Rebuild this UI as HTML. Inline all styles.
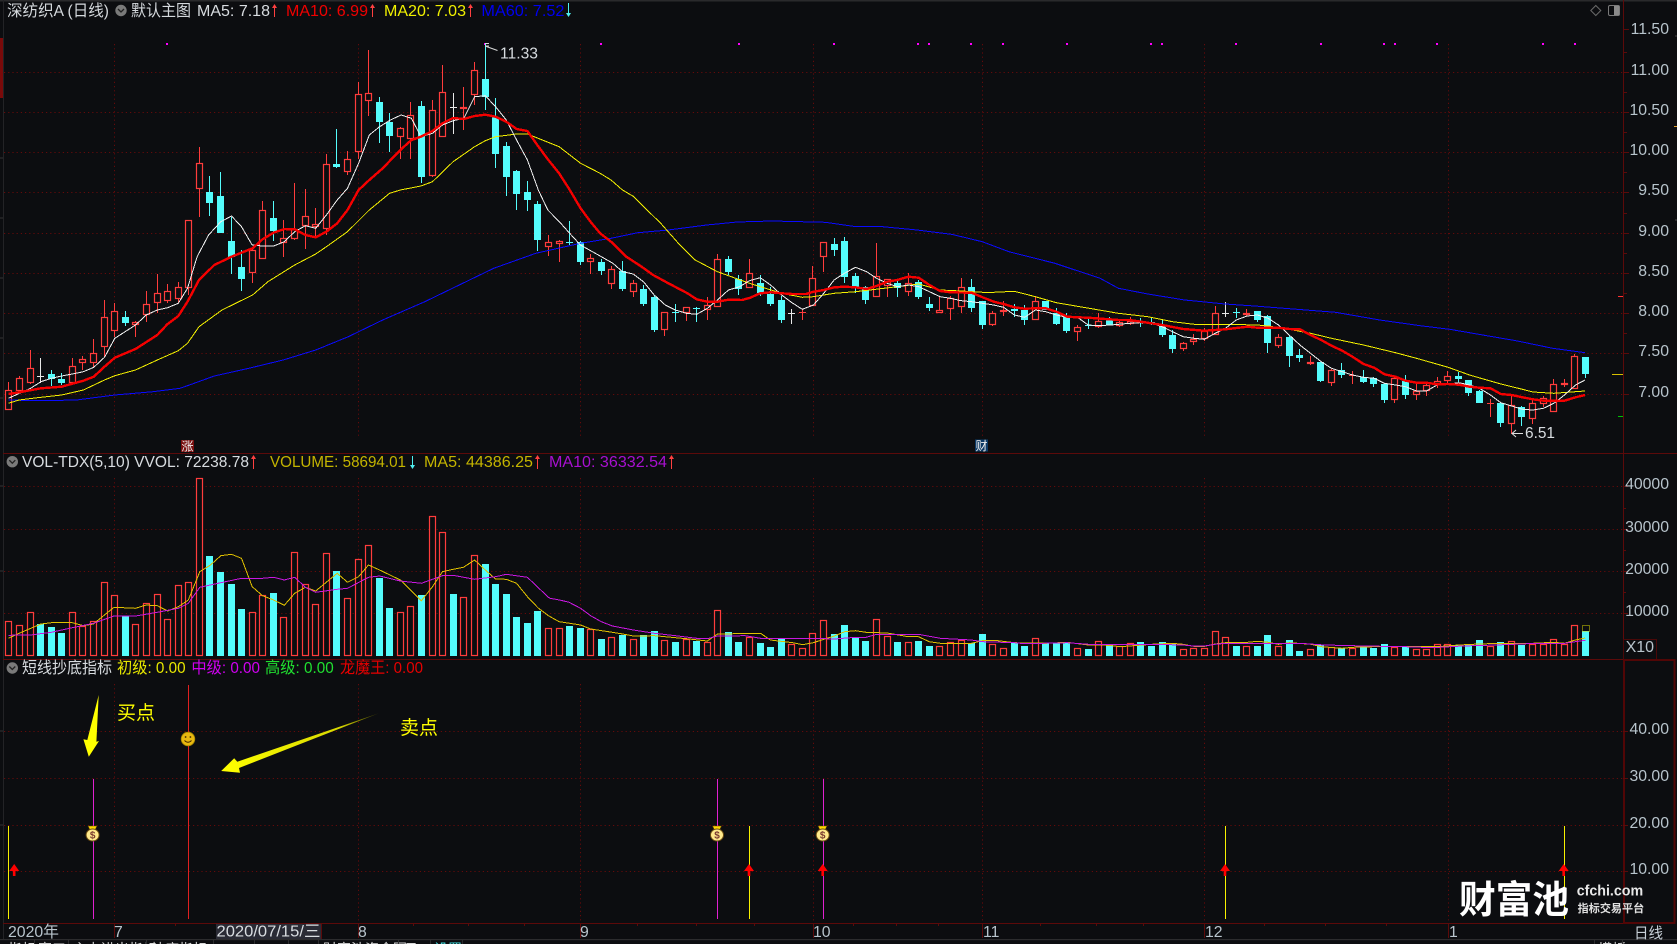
<!DOCTYPE html>
<html lang="zh">
<head>
<meta charset="utf-8">
<title>深纺织A (日线)</title>
<style>
html,body{margin:0;padding:0;background:#0c0d10;width:1677px;height:944px;overflow:hidden}
svg{display:block;position:absolute;left:0;top:0}
text{font-family:"Liberation Sans","Noto Sans CJK SC",sans-serif}
.ax{fill:#b8c4cc;font-size:15.8px;text-anchor:end}
.h{font-size:16px}
</style>
</head>
<body>
<svg id="s" width="1677" height="944" viewBox="0 0 1677 944" xmlns="http://www.w3.org/2000/svg">
<defs>
<linearGradient id="ag" x1="378.9" y1="713.3" x2="225" y2="771" gradientUnits="userSpaceOnUse">
<stop offset="0" stop-color="#3a3a00"/><stop offset="0.25" stop-color="#d8d800"/><stop offset="1" stop-color="#ffff00"/>
</linearGradient>
</defs>
<rect width="1677" height="944" fill="#0c0d10"/>
<rect x="0" y="0" width="1677" height="1.5" fill="#2a2a2c"/>
<rect x="3" y="0" width="1" height="939" fill="#232326"/>
<rect x="0" y="38" width="3" height="60" fill="#7a0a0a"/>
<path d="M0 158H3M0 218H3M0 278H3M0 338H3M0 398H3M0 486H3M0 571H3M0 731H3M0 825H3" stroke="#333" stroke-width="1"/>

<g id="grid" fill="none" stroke="#640a0a" stroke-width="1" stroke-dasharray="1.2 3">
<path d="M4 72.5H1623M4 112.5H1623M4 152.5H1623M4 192.5H1623M4 233.5H1623M4 273.5H1623M4 313.5H1623M4 353.5H1623M4 394.5H1623"/>
<path d="M4 486.5H1623M4 529.5H1623M4 571.5H1623M4 613.5H1623"/>
<path d="M4 731.5H1623M4 778.5H1623M4 825.5H1623M4 871.5H1623"/>
<path d="M114.5 44V438M358.5 44V438M580.5 44V438M813.5 44V438M982.5 44V438M1204.5 44V438M1448.5 44V438"/>
<path d="M114.5 478V655M358.5 478V655M580.5 478V655M813.5 478V655M982.5 478V655M1204.5 478V655M1448.5 478V655"/>
<path d="M114.5 684V923M358.5 684V923M580.5 684V923M813.5 684V923M982.5 684V923M1204.5 684V923M1448.5 684V923"/>
</g>

<g fill="#ff00ff">
<rect x="166" y="43" width="2" height="2"/><rect x="484" y="43" width="2" height="2"/><rect x="600" y="43" width="2" height="2"/><rect x="738" y="43" width="2" height="2"/><rect x="833" y="43" width="2" height="2"/><rect x="917" y="43" width="2" height="2"/><rect x="928" y="43" width="2" height="2"/><rect x="970" y="43" width="2" height="2"/><rect x="1002" y="43" width="2" height="2"/><rect x="1066" y="43" width="2" height="2"/><rect x="1150" y="43" width="2" height="2"/><rect x="1161" y="43" width="2" height="2"/><rect x="1235" y="43" width="2" height="2"/><rect x="1320" y="43" width="2" height="2"/><rect x="1383" y="43" width="2" height="2"/><rect x="1394" y="43" width="2" height="2"/><rect x="1436" y="43" width="2" height="2"/><rect x="1542" y="43" width="2" height="2"/><rect x="1574" y="43" width="2" height="2"/>
</g>

<g id="candles"></g>
<g id="lines" fill="none" shape-rendering="crispEdges"></g>
<g id="vols"></g>
<g id="vlines" fill="none" shape-rendering="crispEdges"></g>
<rect x="1582.5" y="625.5" width="7" height="6" fill="none" stroke="#d8d800" stroke-dasharray="1 1"/>

<!-- panel frames -->
<path d="M3 453.5H1677M3 659.5H1623M3 923.5H1623" stroke="#5c0a0a" stroke-width="1" fill="none"/>
<path d="M1623.5 0V660" stroke="#5c0a0a" stroke-width="1" fill="none"/>
<rect x="1623.5" y="639.5" width="33" height="20" fill="none" stroke="#4a0808"/>
<rect x="1624" y="660" width="50.5" height="263" fill="none" stroke="#520606" stroke-width="2"/>
<rect x="0" y="939" width="1677" height="1.2" fill="#2c2c2e"/>
<path d="M1623 29.5h6M1623 72.5h6M1623 112.5h6M1623 152.5h6M1623 192.5h6M1623 233.5h6M1623 273.5h6M1623 313.5h6M1623 353.5h6M1623 394.5h6M1623 52.5h4M1623 92.5h4M1623 132.5h4M1623 172.5h4M1623 213.5h4M1623 253.5h4M1623 293.5h4M1623 333.5h4M1623 508.5h3M1623 550.5h3M1623 592.5h3M1623 486.5h5M1623 529.5h5M1623 571.5h5M1623 613.5h5M1623 731.5h5M1623 778.5h5M1623 825.5h5M1623 871.5h5" stroke="#5c0a0a"/>
<path d="M1618 296.5h5" stroke="#ff3030"/>
<path d="M1618 416.5h5" stroke="#00c000"/>
<path d="M1612 374.5h11" stroke="#d8c000"/>
<path d="M1674 126.5h3" stroke="#e0a030"/>
<path d="M1676 35v2M1676 219v2" stroke="#444"/>
<path d="M114.5 923v15M358.5 923v15M580.5 923v15M813.5 923v15M982.5 923v15M1204.5 923v15M1448.5 923v15M175.5 923v3M300.5 923v3M413.5 923v3M468.5 923v3M524.5 923v3M637.5 923v3M696.5 923v3M754.5 923v3M853.5 923v3M896.5 923v3M938.5 923v3M1040.5 923v3M1096.5 923v3M1143.5 923v3M1264.5 923v3M1325.5 923v3M1386.5 923v3" stroke="#5c0a0a"/>

<!-- top-right icons -->
<path d="M1595.8 5.5L1600.8 10.5L1595.8 15.5L1590.8 10.5Z" fill="none" stroke="#6a6a6a"/>
<rect x="1608.5" y="5.5" width="11" height="10" rx="1.5" fill="none" stroke="#7a7a7a"/>
<rect x="1614" y="6" width="5" height="9" fill="#8a8a8a"/>

<!-- header 1 -->
<text x="7" y="16" class="h" fill="#d4d8dc" textLength="102" lengthAdjust="spacingAndGlyphs">深纺织A (日线)</text>
<circle cx="121" cy="10.5" r="5.7" fill="#7a7a7a"/><path d="M118 9l3 3 3-3" fill="none" stroke="#222" stroke-width="1.3"/>
<text x="131" y="16" class="h" fill="#d4d8dc" textLength="60" lengthAdjust="spacingAndGlyphs">默认主图</text>
<text x="197" y="16" class="h" fill="#d8dce0" textLength="73" lengthAdjust="spacingAndGlyphs">MA5: 7.18</text>
<text x="286" y="16" class="h" fill="#f00000" textLength="82" lengthAdjust="spacingAndGlyphs">MA10: 6.99</text>
<text x="384" y="16" class="h" fill="#f0f000" textLength="82" lengthAdjust="spacingAndGlyphs">MA20: 7.03</text>
<text x="481.4" y="16" class="h" fill="#0000f0" textLength="83" lengthAdjust="spacingAndGlyphs">MA60: 7.52</text>
<path d="M274.5 7V17M372.5 7V17M470.5 7V17" stroke="#ff4040"/>
<path d="M274.5 4l2.5 4h-5zM372.5 4l2.5 4h-5zM470.5 4l2.5 4h-5z" fill="#ff4040"/>
<path d="M568.5 3V13" stroke="#50f0f0"/><path d="M568.5 17l2.5-4h-5z" fill="#50f0f0"/>

<!-- header 2 -->
<circle cx="12.3" cy="461.7" r="5.7" fill="#7a7a7a"/><path d="M9.3 460.2l3 3 3-3" fill="none" stroke="#222" stroke-width="1.3"/>
<text x="22" y="467" class="h" fill="#d8dce0" textLength="227" lengthAdjust="spacingAndGlyphs">VOL-TDX(5,10) VVOL: 72238.78</text>
<text x="270" y="467" class="h" fill="#c4b400" textLength="136" lengthAdjust="spacingAndGlyphs">VOLUME: 58694.01</text>
<text x="424" y="467" class="h" fill="#c4b400" textLength="109" lengthAdjust="spacingAndGlyphs">MA5: 44386.25</text>
<text x="549" y="467" class="h" fill="#a810d0" textLength="118" lengthAdjust="spacingAndGlyphs">MA10: 36332.54</text>
<path d="M253.5 458V469M537.5 458V469M671.5 458V469" stroke="#ff4040"/>
<path d="M253.5 455l2.5 4h-5zM537.5 455l2.5 4h-5zM671.5 455l2.5 4h-5z" fill="#ff4040"/>
<path d="M412.5 456V466" stroke="#50f0f0"/><path d="M412.5 469l2.5-4h-5z" fill="#50f0f0"/>

<!-- header 3 -->
<circle cx="12.3" cy="668" r="5.7" fill="#7a7a7a"/><path d="M9.3 666.5l3 3 3-3" fill="none" stroke="#222" stroke-width="1.3"/>
<text x="22" y="673" class="h" fill="#d8dce0" textLength="90" lengthAdjust="spacingAndGlyphs">短线抄底指标</text>
<text x="117" y="673" class="h" fill="#e8e800" textLength="68.6" lengthAdjust="spacingAndGlyphs">初级: 0.00</text>
<text x="191.4" y="673" class="h" fill="#d000f0" textLength="68.6" lengthAdjust="spacingAndGlyphs">中级: 0.00</text>
<text x="265" y="673" class="h" fill="#20e030" textLength="68.7" lengthAdjust="spacingAndGlyphs">高级: 0.00</text>
<text x="340" y="673" class="h" fill="#e80000" textLength="83" lengthAdjust="spacingAndGlyphs">龙魔王: 0.00</text>

<!-- axis labels -->
<g>
<text x="1669" y="34" class="ax">11.50</text><text x="1669" y="75" class="ax">11.00</text><text x="1669" y="115" class="ax">10.50</text><text x="1669" y="155" class="ax">10.00</text><text x="1669" y="195" class="ax">9.50</text><text x="1669" y="236" class="ax">9.00</text><text x="1669" y="276" class="ax">8.50</text><text x="1669" y="316" class="ax">8.00</text><text x="1669" y="356" class="ax">7.50</text><text x="1669" y="397" class="ax">7.00</text>
<text x="1669" y="489" class="ax">40000</text><text x="1669" y="532" class="ax">30000</text><text x="1669" y="574" class="ax">20000</text><text x="1669" y="616" class="ax">10000</text>
<text x="1625.6" y="652" style="font-size:16px" fill="#b8c4cc">X10</text>
<text x="1669" y="734" class="ax">40.00</text><text x="1669" y="781" class="ax">30.00</text><text x="1669" y="828" class="ax">20.00</text><text x="1669" y="874" class="ax">10.00</text>
</g>

<!-- price annotations -->
<path d="M485 46l12.5 4.5M485 43.5h4M485 46h4" stroke="#d8d8d8" fill="none"/>
<text x="500" y="58.5" style="font-size:16px" fill="#d8dce0" textLength="38" lengthAdjust="spacingAndGlyphs">11.33</text>
<path d="M1523 433.5H1512M1516 430l-4 3.5 4 3.5" stroke="#e0e0e0" fill="none"/>
<text x="1525" y="438" style="font-size:16px" fill="#d8dce0" textLength="30" lengthAdjust="spacingAndGlyphs">6.51</text>

<rect x="181" y="440" width="13" height="12" fill="#7a1010"/>
<text x="181.5" y="450.5" style="font-size:12px" fill="#f0f0f0">涨</text>
<rect x="975" y="439.5" width="13" height="12" fill="#0d3a66"/>
<text x="975.5" y="450" style="font-size:12px" fill="#f0f0f0">财</text>

<!-- panel 3 -->
<g fill="none" stroke-width="1">
<path d="M8.5 826V919M749.5 826V919M1225.5 826V919M1564.5 826V919" stroke="#f8f000"/>
<path d="M93.5 779V919M717.5 779V919M823.5 779V919" stroke="#e020d0"/>
<path d="M188.5 685V919" stroke="#e02020"/>
</g>
<g fill="#ff0000">
<path d="M14.2 864l5 7h-3.7v5h-2.6v-5h-3.7z"/>
<path d="M749 864l5 7h-3.7v5h-2.6v-5h-3.7z"/>
<path d="M822.7 864l5 7h-3.7v5h-2.6v-5h-3.7z"/>
<path d="M1225 864l5 7h-3.7v5h-2.6v-5h-3.7z"/>
<path d="M1563.7 864l5 7h-3.7v5h-2.6v-5h-3.7z"/>
</g>
<g>
<path d="M88 826h9l-2 4h-5z" fill="#ffd800" stroke="#5a4008" stroke-width=".6"/>
<ellipse cx="92.6" cy="835" rx="6.5" ry="6" fill="#ffe98c" stroke="#6a4a10"/>
<text x="92.6" y="838.5" text-anchor="middle" style="font-size:10px;font-weight:bold" fill="#7a3a30">$</text>
<path d="M712.5 826h9l-2 4h-5z" fill="#ffd800" stroke="#5a4008" stroke-width=".6"/>
<ellipse cx="717" cy="835" rx="6.5" ry="6" fill="#ffe98c" stroke="#6a4a10"/>
<text x="717" y="838.5" text-anchor="middle" style="font-size:10px;font-weight:bold" fill="#7a3a30">$</text>
<path d="M818 826h9l-2 4h-5z" fill="#ffd800" stroke="#5a4008" stroke-width=".6"/>
<ellipse cx="822.7" cy="835" rx="6.5" ry="6" fill="#ffe98c" stroke="#6a4a10"/>
<text x="822.7" y="838.5" text-anchor="middle" style="font-size:10px;font-weight:bold" fill="#7a3a30">$</text>
</g>
<circle cx="188" cy="739" r="6.8" fill="#e8b810" stroke="#a88800" stroke-width=".8"/>
<circle cx="185.6" cy="737" r=".9" fill="#402800"/><circle cx="190.4" cy="737" r=".9" fill="#402800"/>
<path d="M184.5 740.5q3.5 3.5 7 0" fill="none" stroke="#402800" stroke-width=".9"/>

<text x="117" y="719" style="font-size:19px" fill="#ffff00" textLength="38" lengthAdjust="spacingAndGlyphs">买点</text>
<text x="400" y="734" style="font-size:19px" fill="#ffff00" textLength="38" lengthAdjust="spacingAndGlyphs">卖点</text>
<path d="M98.7 695L96.4 741.7L99 741L88.8 756.7L83.4 739.3L87.3 740Z" fill="#ffff00"/>
<path d="M378.9 713.3L237.3 761.7L234.2 758.3L221.2 771L240 772.7L239 768Z" fill="url(#ag)"/>

<!-- date row -->
<g style="font-size:15.8px" fill="#b8c4cc">
<text x="8" y="937" textLength="51" lengthAdjust="spacingAndGlyphs">2020年</text>
<text x="114" y="937">7</text><text x="358" y="937">8</text><text x="580" y="937">9</text>
<text x="813" y="937">10</text><text x="983" y="937">11</text><text x="1205" y="937">12</text><text x="1449" y="937">1</text>
</g>
<rect x="216" y="924" width="105" height="15" fill="#2a2b35"/>
<text x="216.5" y="936.5" style="font-size:15.8px" fill="#d8dce0" textLength="104" lengthAdjust="spacingAndGlyphs">2020/07/15/三</text>
<path d="M321.5 924v15" stroke="#5c0a0a"/>
<text x="1634" y="938" style="font-size:15px" fill="#c8d0d8" textLength="29" lengthAdjust="spacingAndGlyphs">日线</text>

<!-- clipped bottom toolbar -->
<g style="font-size:14px" fill="#d8d8d8">
<text x="8" y="954">指标</text><text x="38" y="954">窗口</text><text x="73" y="954">主力进出指标</text><text x="151" y="954">抄底指标</text><text x="218" y="954">MA5</text><text x="260" y="954">VOL</text><text x="293" y="954">KDJ</text><text x="323" y="954">财富池资金图</text><text x="404" y="954">日K</text><text x="434" y="954" fill="#40e0e0">设置</text><text x="1598" y="954">模板</text>
</g>
<path d="M34.5 940v4M68.5 940v4M146.5 940v4M213.5 940v4M254.5 940v4M288.5 940v4M318.5 940v4M398.5 940v4M430.5 940v4M462.5 940v4M1594.5 940v4M1622.5 940v4" stroke="#2c2c2e"/>

<!-- watermark -->
<text x="1459" y="913" style="font-size:38px;font-weight:bold" fill="#ffffff" textLength="110" lengthAdjust="spacingAndGlyphs">财富池</text>
<text x="1576.7" y="895.5" style="font-size:15px;font-weight:bold" fill="#e8e8e8" textLength="66.5" lengthAdjust="spacingAndGlyphs">cfchi.com</text>
<text x="1577.7" y="912" style="font-size:11px;font-weight:bold" fill="#e0e0e0" textLength="66.5" lengthAdjust="spacingAndGlyphs">指标交易平台</text>
</svg>

<script>
(function(){
var NS='http://www.w3.org/2000/svg';
function el(p,n,a){var e=document.createElementNS(NS,n);for(var k in a)e.setAttribute(k,a[k]);document.getElementById(p).appendChild(e);return e;}
var BG='#0c0d10',R='#ff3c3c',C='#54fcfc',W='#e8e8e8';
function X(i){return Math.round(8.4+10.58*i);}
var c=[
'r',390.3,409.7,382,410,'r',378.3,390.7,376,391,'r',368,383,350,384,'w',376,376,358,383,'c',374,378.7,370,386,'c',379,383.3,373,385,'r',365.7,383.3,358,384,'r',358.7,362.7,356,370,'r',352.7,363.3,339,367,'r',316.7,346.7,300,357,
'r',311.3,331.3,302.7,337,'c',317,322.7,311,326,'r',322.3,325.3,321,337,'r',304.3,315.3,291,322,'r',293.3,303.3,274,313,'r',291.3,300.7,284,303,'r',287.3,299,282,303,'r',220.3,287.7,220,295,'r',163.3,189.3,147,216.7,'c',192.3,202.7,176,216,
'c',196,232.7,172,233,'c',241,257.3,217,274,'c',267,278.7,250,290.7,'r',250.3,273.3,246.7,282.7,'r',210.3,258.7,201,258.7,'c',218,231.3,201,240.7,'r',238.3,242.7,220,257,'r',229.3,239,183,240,'r',216.3,226,189,248.7,'r',224,226.7,208,236,
'r',164.3,228.7,154,235,'c',164,167,129,168,'r',159.3,171.7,151,174.7,'r',94.3,151.7,82,159,'r',93.3,101.3,50,116,'c',102,121.7,97.3,142.7,'c',122.3,135.7,113,152,'r',128.3,136.7,126.7,158.7,'r',115.3,139.3,102,158.7,'c',106,176.7,101.3,183.3,
'r',110.3,175.7,100,176.7,'r',92.3,136.7,65,136.7,'w',107.3,107.3,92.7,134,'r',107.3,109.3,87.3,130,'r',70.3,94.7,62,105,'c',79,96.7,44,110,'c',117.3,154,98.3,168,'c',146,176.7,142.3,195.7,'c',171,194,170,210,'c',192,200,181.3,210.7,
'c',204,240,201,250.7,'r',242.3,246.7,235,256,'r',241.3,243.7,240,261.7,'c',242.3,242.3,221,245,'c',241.7,262,240.7,265,'r',258.3,261.7,254,274,'c',262,271.3,259.3,275,'r',269.3,284,266,289,'c',271,289.3,261,290.7,'r',283.3,291.7,280,296.7,
'c',289,304,285,306,'c',296.7,330,295,332,'r',312.3,330,312,336,'c',311.7,311.7,304,322,'r',307.3,313,307,321,'c',307.7,307.7,307,322,'r',305.3,310,297,320,'r',259.3,307,254,307.3,'c',259,272,256,275,'c',279.3,289,275,295,
'r',273.3,287.7,259,287.7,'c',282.7,293.3,275,296,'c',294,304,286.7,306,'c',300,320,296,322.7,'w',312.7,312.7,309,324,'r',312,312,309,320,'r',278.3,306,266,306,'r',242.3,256.7,242,271.7,'c',244,250,238.3,256,'c',241,276.7,237.3,282.7,
'c',276,287.3,273.3,292.7,'c',287.3,300,286,304,'r',275.7,296.7,243.3,296.7,'r',279.3,285.7,279,296.7,'c',282.7,288.3,281,296.7,'r',283.3,292,273.3,296,'c',281.7,297.3,280,299.3,'c',304,308,296.7,310.7,'r',310.3,313.3,296.7,313.3,'r',298.3,308.7,296,320,
'r',286.7,306.7,278,312.7,'c',287.3,308,279.3,312,'c',301,325,301,329,'r',313.3,325,311.3,326,'r',310,312.3,301.3,316,'c',308.7,310.7,304,317.3,'c',310,320,305,325,'r',301.3,320,296,320,'c',301,310,301,310,'c',312.7,324,308,325,
'c',317.3,330.7,313,332.7,'r',327.3,331.7,325,340.7,'c',325,325,317.3,328.7,'r',320.7,326.7,313,328.3,'c',319.3,325,316.7,325,'r',321.7,325.7,319,327,'r',321.3,324,316.7,325,'c',322,322,318,327,'c',322,322,317,325,'c',325,335,320,336.7,
'c',335,349,330,352.7,'r',343.3,349.3,341.7,350.7,'r',339.3,342,334,345,'r',330.7,339.3,328.3,340.7,'r',313.3,335,306,335,'w',312.7,312.7,302.3,317.3,'c',312.3,312.3,308.3,318.3,'r',313.3,315,309.3,316,'c',311,320,311,321.7,'c',316,342.7,315,352.7,
'r',337.3,345.7,334,347.7,'c',337,356,335,366.7,'c',355,358,349.3,362,'r',361.7,364,356,365,'c',362,380.7,362,381.7,'r',370.3,382.7,369.3,386,'c',370,375,363.3,377.7,'r',374.7,376,370.7,384,'c',376.7,381.7,370,382.7,'c',378.3,384,377.3,387.3,
'c',384,400,383.3,402.7,'r',378.3,400.3,376.7,402.7,'c',381,394.7,375,399.3,'r',391,395.3,384,400,'r',385.3,391,384,396,'r',380.7,384.3,377.3,388.3,'r',376,380.7,370.7,384,'c',376,379,371.7,381.7,'c',380,392.7,380,396,'c',391,402.7,390,402.7,
'r',402.7,403.7,399.3,416.7,'c',403.3,423.3,402.7,427,'r',405,423.7,395,434.3,'c',407,417,405.7,426,'r',403.3,419.3,400,424,'r',398.3,404.3,396,406.7,'r',384.3,411.7,379,411.7,'r',382.7,385.3,379,387.3,'r',356.3,388.7,354,388.7,'c',357,374,357,377.7
];
for(var n=0;n<c.length;n+=5){
 var i=n/5,x=X(i),col=c[n],t=Math.round(c[n+1]),b=Math.round(c[n+2]),wt=Math.round(c[n+3]),wb=Math.round(c[n+4]);
 var clr=col==='r'?R:col==='c'?C:W;
 el('candles','rect',{x:x,y:wt,width:1,height:Math.max(wb-wt,1),fill:clr});
 if(b-t<2){
  el('candles','rect',{x:x-3,y:t,width:7,height:1,fill:clr});
 }else if(col==='r'){
  el('candles','rect',{x:x-2.5,y:t+.5,width:6,height:b-t-1,fill:BG,stroke:clr,'stroke-width':1.2});
 }else{
  el('candles','rect',{x:x-3,y:t,width:7,height:b-t,fill:clr});
 }
}
function pts(segs){var o=[];segs.forEach(function(s){var a=s[2];for(var k=0;k<a.length;k+=2){o.push((s[0]+a[k]/s[1]).toFixed(1)+','+(s[3]+a[k+1]/3).toFixed(1));}});return o.join(' ');}
var A=2.613,B=2.717,D=2.975;
var ma5=pts([
[0,A,[22,445,80,415,107,395,134,385,161,378,189,372,218,365,245,352,273,322,300,265,327,245,354,225,382,195,411,180,438,173,466,160,490,115],250],
[0,A,[515,770,545,705,577,665,605,648,631,680,659,735,686,738,715,738,743,725,770,695,798,677,825,685,853,645,881,600,908,565,937,490,965,405,992,380,1020,360,1048,345,1075,355,1100,410,1130,400,1156,375,1184,362,1212,355,1240,290,1268,287,1295,320,1323,360,1350,420,1378,480],0],
[500,A,[100,570,125,630,155,665,182,700,210,735],0],
[500,A,[265,80,295,100,320,125,348,132,375,155,403,195,432,225,458,240,487,250,514,253,542,235,568,210,597,180,626,170,652,152,680,143,707,165,736,195,763,218,790,238,819,225,846,190,873,150,900,130,929,112,958,125,984,145,1012,160,1038,170,1067,165,1094,170,1122,185,1150,200,1177,205,1205,212,1232,215,1261,220,1290,225,1316,232,1344,255,1371,262,1399,240,1426,245,1454,255,1482,262,1509,262,1537,285,1562,287],230],
[1100,B,[30,135,80,130,110,128,140,130,169,140,197,155,226,170,256,175,283,178,313,160,341,145,370,120,400,108,428,105,457,115,485,135,514,165,543,195,572,220,601,245,629,265,658,275,686,285,716,292,745,295,773,310,803,315,830,320,860,333,887,333,916,315,946,312,975,308,1004,315,1031,325,1061,345,1089,368,1118,378,1148,388,1176,390,1205,385,1233,370,1262,345,1292,315,1318,300],280]
]);
var ma10=pts([
[0,A,[22,432,50,427,107,415,161,410,218,392,245,380,273,350,300,323,354,297,411,255,438,222,466,198,490,155,520,90,560,45],250],
[0,A,[605,770,660,745,686,718,715,698,743,687,770,688,798,705,825,712,853,695,881,670,908,630,937,570,965,540,1000,505,1046,450,1075,420,1100,410,1130,393,1156,370,1184,354,1212,357,1240,348,1268,344,1295,350,1323,365,1350,387,1378,393,1407,440,1433,480,1461,520,1489,570,1517,625,1543,665,1568,700],0],
[500,A,[290,725,330,770,370,800,400,825,440,850,490,880],0],
[500,A,[514,208,542,215,568,215,597,209,632,210,652,204,680,190,707,187,736,190,763,192,800,192,819,185,846,180,873,172,900,170,929,172,958,177,984,168,1012,155,1038,150,1067,140,1094,143,1122,165,1150,183,1177,187,1232,188,1261,202,1290,215,1316,222,1344,232,1371,236,1399,235,1426,235,1454,245,1482,260,1509,262,1537,263],230],
[1100,B,[50,120,80,120,111,125,169,135,226,147,283,152,313,150,341,148,400,140,428,143,457,143,485,143,514,147,543,148,572,165,601,180,629,197,658,212,686,230,716,252,745,263,773,283,803,290,830,302,860,308,887,308,916,313,946,312,975,314,1004,320,1031,323,1061,325,1089,342,1118,345,1148,352,1176,358,1205,362,1233,362,1262,362,1292,352,1318,345],280]
]);
var ma20=pts([
[0,A,[22,460,50,450,107,442,161,435,218,420,273,390,300,377,354,360,411,330,466,302,490,280,520,230,580,180,660,135,700,95],250],
[0,A,[770,795,825,762,853,740,908,695,965,630,1018,580,1046,570,1100,558,1130,545,1184,485,1240,440,1268,422,1295,410,1350,402,1378,402,1461,440,1517,490,1568,520],0],
[500,A,[290,540,320,570,350,590,380,625,420,670,470,735,510,780],0],
[500,A,[568,125,652,160,736,190,790,202,819,200,873,190,929,185,1038,170,1094,162,1150,180,1205,183,1261,187,1290,187,1344,184,1399,200,1454,218],230],
[1100,B,[50,100,130,110,197,125,256,133,341,133,428,135,457,138,514,148,572,160,629,175,716,195,803,218,860,235,946,262,1004,285,1089,312,1148,328,1176,336,1233,340,1292,335,1318,333],280]
]);
var ma60=pts([
[0,A,[22,450,107,452,200,450,300,435,400,425,470,415,495,405,560,378,650,355,740,330,825,300,910,260,1000,210,1110,155,1200,105,1290,55,1400,10],250],
[500,A,[210,730,290,715,360,698,440,690,540,675,620,666,710,663,850,667,930,680,1000,680,1090,690,1180,703,1260,725,1330,755,1450,790,1568,835],0],
[1100,B,[50,25,130,42,230,60,340,72,420,78,500,85,640,97,760,120,870,137,950,148,1040,165,1130,182,1230,205,1318,218],280]
]);
el('lines','polyline',{points:ma60,stroke:'#0a0aff','stroke-width':1});
el('lines','polyline',{points:ma20,stroke:'#f4f000','stroke-width':1});
el('lines','polyline',{points:ma5,stroke:'#f0f0f0','stroke-width':1});
el('lines','polyline',{points:ma10,stroke:'#f40000','stroke-width':2.4});

var v=[
'r',514,'r',526,'r',487,'c',522,'c',531,'c',549,'r',487,'r',527,'r',514,'r',397,'r',436,'c',497,'r',523,'r',460,'r',433,'r',508,'r',406,'r',397,'r',85,'c',318,'c',366,'c',402,'c',477,'r',487,'r',436,'c',429,'r',502,'r',307,'r',403,'r',463,'r',310,'c',363,'r',445,'r',328,'r',286,'c',384,'c',474,'r',487,'r',469,'c',435,'r',199,'r',247,'c',432,'r',441,'r',316,'c',342,'c',402,'c',432,'c',501,'c',519,'c',483,'r',535,'r',535,'c',528,'c',534,'r',538,'c',567,
'r',562,'c',555,'r',568,'c',555,'c',543,'r',571,'c',576,'r',568,'c',573,'r',577,'r',481,'c',546,'c',576,'r',561,'c',579,'c',591,'c',564,'r',583,'r',595,'r',550,'r',511,'c',552,'c',525,'c',564,'c',573,'r',508,'r',559,'c',576,'r',577,'c',573,'c',588,'r',589,'r',577,'r',570,'c',579,'c',552,'r',583,'r',595,'c',579,'c',588,'r',565,'c',580,'c',579,'c',579,'r',595,'c',597,'r',574,'c',586,'r',589,'r',580,'c',576,
'c',587,'c',576,'c',582,'r',598,'r',595,'r',595,'r',544,'r',562,'c',587,'r',589,'c',587,'c',555,'r',589,'c',570,'c',603,'r',598,'c',585,'r',592,'c',595,'r',593,'c',590,'c',593,'c',582,'r',592,'c',590,'r',598,'r',598,'r',583,'r',583,'c',585,'c',582,'c',570,'r',589,'c',576,'r',574,'c',585,'r',582,'r',582,'r',568,'r',582,'r',526,'c',543
];
for(var m=0;m<v.length;m+=2){
 var j=m/2,vx=X(j),top=Math.round(450+v[m+1]/3),bot=656;
 if(v[m]==='r'){el('vols','rect',{x:vx-2.5,y:top+.5,width:6,height:bot-top-1,fill:BG,stroke:R,'stroke-width':1.2});}
 else{el('vols','rect',{x:vx-3,y:top,width:7,height:bot-top,fill:C});}
}
var vm5=pts([
[0,A,[22,565,50,550,107,522,134,518,189,518,218,527,244,522,273,495,298,472,354,475,382,465,411,467,438,483,466,470,492,450,522,365,550,345,577,317,605,313,631,325,659,410,686,437,715,450,743,466,770,430,798,412,825,423,881,370,908,397,937,380,963,345,992,360,1046,390,1101,452,1130,410,1156,365,1184,358,1211,352,1240,330,1268,360,1295,387,1323,388,1350,400,1378,440,1407,475,1433,497,1461,515,1489,520,1517,525],450],
[550,A,[106,537,163,547,190,552,218,558,273,557,328,563,357,566,411,573,438,552,550,550,576,570,634,578,660,584,688,578,743,558,770,545,798,542,826,547,881,549,936,560,963,560,991,575,1020,580,1101,580,1130,572,1170,572,1214,578,1296,580,1350,577,1407,585,1461,586,1490,590],450],
[1150,D,[5,583,66,580,98,583,130,589,162,589,194,582,224,578,290,577,320,574,352,577,382,583,415,578,480,583,510,590,572,595,602,592,667,590,700,590,760,590,855,590,918,585,980,582,1043,580,1138,580,1200,577,1233,580,1265,570,1295,564],450]
]);
var vm10=pts([
[0,A,[22,556,80,555,134,547,189,533,244,520,298,498,354,498,411,487,466,475,492,460,522,412,577,398,631,385,686,385,715,382,743,390,770,382,798,412,825,427,881,418,908,415,963,382,992,378,1046,393,1101,400,1156,377,1184,376,1240,388,1295,380,1323,373,1378,382,1433,442],450],
[550,A,[0,445,25,450,50,457,80,475,106,497,134,515,163,528,218,540,273,550,328,557,383,565,411,566,438,558,510,557,550,565,605,565,688,565,743,567,798,562,826,562,853,553,908,553,963,553,1020,565,1101,570,1130,575,1214,578,1240,581,1352,578,1407,583,1546,583],450],
[1150,D,[5,583,98,585,130,588,162,588,194,583,224,580,352,580,445,580,520,585,640,588,760,590,810,592,860,592,930,588,1030,585,1150,580,1233,580,1265,575,1295,571],450]
]);
el('vlines','polyline',{points:vm5,stroke:'#e0c000','stroke-width':1});
el('vlines','polyline',{points:vm10,stroke:'#c818e0','stroke-width':1});
})();
</script>
</body>
</html>
